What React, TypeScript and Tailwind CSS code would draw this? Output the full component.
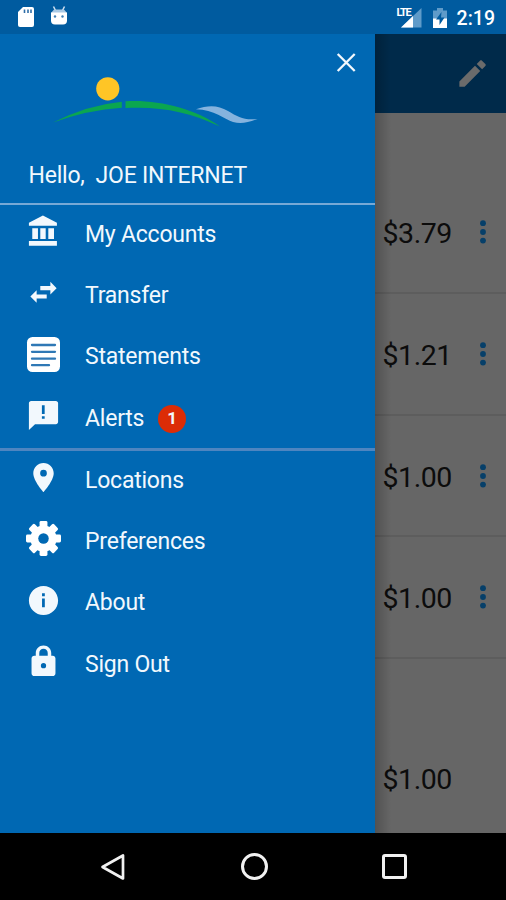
import React from "react";

type IconProps = { className?: string; children: React.ReactNode };

const Icon = ({ className = "w-[35px] h-[35px]", children }: IconProps) => (
  <svg viewBox="0 0 24 24" fill="currentColor" className={className}>
    {children}
  </svg>
);

const mainLinks = [
  {
    label: "My Accounts",
    icon: (
      <Icon>
        <path d="M4.300 9.700v7.500h3.900V9.700H4.300zm5.500 0v7.500h3.700V9.700H9.800zM2 21.800h19.200v-3.300H2v3.300zM15.300 9.700v7.500h3.900V9.700h-3.900zM11.600 1L2 6v2h19.200V6l-9.600-5z" />
      </Icon>
    ),
  },
  {
    label: "Transfer",
    icon: (
      <Icon>
        <path d="M7.300 10.400L3 14.700l4.300 4.300v-2.900h6.900v-2.800H7.300v-2.900zM21 9l-4.300-4.300v2.900H9.800v2.800h6.900v2.900L21 9z" />
      </Icon>
    ),
  },
  {
    label: "Statements",
    icon: (
      <svg viewBox="0 0 35 35" className="w-[35px] h-[35px]">
        <rect x="1" y="0" width="33" height="35" rx="5.500" fill="#fff" />
        <path
          d="M6 8h23M6 14.800h23M6 21.700h23M6 28.200h17"
          stroke="#2f78b5"
          strokeWidth="2.300"
          strokeLinecap="round"
        />
      </svg>
    ),
  },
  {
    label: "Alerts",
    badge: 1,
    icon: (
      <Icon>
        <path d="M20.500 2h-17C2.700 2 2 2.700 2 3.500V22l4.200-4h14.300c.8 0 1.500-.7 1.500-1.500v-13c0-.8-.7-1.500-1.500-1.500zM12.800 14.300h-1.900v-1.800h1.900v1.800zm0-3.300h-1.900V5h1.900v6z" />
      </Icon>
    ),
  },
];

const moreLinks = [
  {
    label: "Locations",
    icon: (
      <Icon>
        <path d="M12 2C8.130 2 5 5.130 5 9c0 5.250 7 13 7 13s7-7.750 7-13c0-3.870-3.130-7-7-7zm0 9.300a2.300 2.300 0 010-4.600 2.300 2.300 0 010 4.600z" />
      </Icon>
    ),
  },
  {
    label: "Preferences",
    icon: (
      <svg viewBox="-12 -12 24 24" className="w-[35px] h-[35px]">
        <g fill="#fff">
          {[0, 45, 90, 135].map((a) => (
            <rect
              key={a}
              x="-2.700"
              y="-12"
              width="5.400"
              height="24"
              rx="1"
              transform={`rotate(${a})`}
            />
          ))}
          <circle r="9" />
        </g>
        <circle r="3.600" fill="#0068b3" />
      </svg>
    ),
  },
  {
    label: "About",
    icon: (
      <Icon>
        <path d="M12 2C6.480 2 2 6.480 2 12s4.480 10 10 10 10-4.480 10-10S17.520 2 12 2zm.9 14.700h-1.900v-6h1.900v6zm0-7.700h-1.900V7.100h1.900V9z" />
      </Icon>
    ),
  },
  {
    label: "Sign Out",
    icon: (
      <Icon>
        <path d="M18.300 8h-1V6.200C17.300 3.300 15 1 12 1S6.700 3.300 6.700 6.200V8h-1c-1.100 0-1.900.9-1.900 2v10c0 1.100.8 2 1.900 2h12.600c1.100 0 1.900-.9 1.900-2V10c0-1.100-.8-2-1.900-2zM12 16.700a1.800 1.800 0 010-3.600 1.800 1.800 0 010 3.600zM14.900 8H9.100V6.200c0-1.700 1.200-2.900 2.900-2.900s2.900 1.200 2.900 2.900V8z" />
      </Icon>
    ),
  },
];

const balances = ["$3.79", "$1.21", "$1.00", "$1.00"];

const StatusBar = () => (
  <div className="h-[34px] shrink-0 bg-[#005b9f] flex items-center justify-between pl-[17px] pr-[11px]">
    <div className="flex items-center">
      <svg viewBox="0 0 18 22" className="w-[18px] h-[22px]">
        <path d="M6 1h9q2 0 2 2v16q0 2-2 2H3q-2 0-2-2V6z" fill="#fff" />
        <path
          d="M7.500 3.500v3.500M11 3.500v3.500M14 3.500v3.500"
          stroke="#2f6ea8"
          strokeWidth="1.600"
        />
      </svg>
      <svg viewBox="0 0 18 22" className="w-[18px] h-[22px] ml-[15px]">
        <path
          d="M3.500 0.500l2 4M14.500 0.500l-2 4"
          stroke="#cfe0f0"
          strokeWidth="1.500"
        />
        <path d="M4 3.500h10L17 7H1z" fill="#a9c9e4" />
        <path d="M1 6.500h16V14.500q0 4-4 4H5q-4 0-4-4z" fill="#fff" />
        <circle cx="5" cy="10.500" r="1.200" fill="#3f7fb4" />
        <circle cx="12.500" cy="10.500" r="1.200" fill="#3f7fb4" />
      </svg>
    </div>
    <div className="flex items-center">
      <div className="relative w-[26px] h-[22px]">
        <svg viewBox="0 0 26 22" className="w-[26px] h-[22px]">
          <path d="M25.500 2v19.500H5z" fill="#5f9bc9" />
          <path d="M17 10v11.500H5z" fill="#fff" />
        </svg>
        <span className="absolute left-px top-0.5 text-[11px] leading-[10px] font-bold tracking-[-1.3px] text-white">
          LTE
        </span>
      </div>
      <svg viewBox="0 0 16 22" className="w-4 h-[22px] ml-[10px] mt-px">
        <path d="M1 3.500h4V1h6v2.500h4V12H1z" fill="#5f9bc9" />
        <path d="M1 11.500h14V21H1z" fill="#fff" />
        <path d="M9.500 5L4 12.500h3.500V18l5-7.500H9z" fill="#005b9f" />
      </svg>
      <span className="ml-[9px] mt-[3px] text-[19.5px] font-medium text-white leading-none">
        2:19
      </span>
    </div>
  </div>
);

const Logo = () => (
  <svg viewBox="0 0 210 57" className="w-[210px] h-[57px]">
    <circle cx="57.800" cy="18.800" r="11.600" fill="#ffc526" />
    <path d="M3 52.500Q38 35 71.800 31.800v6Q38 40 3 52.500z" fill="#0ba650" />
    <path
      d="M75.500 31.300C105 29 145 38 170 56.500C140 42 110 36 75.500 38z"
      fill="#0ba650"
    />
    <path
      d="M146 39.300C158 35 168 35 178 41S194 50.500 207.500 49C198 52.500 191 54.500 183 52S164 39.500 146 39.300z"
      fill="#85b3de"
    />
  </svg>
);

const MenuItem = ({
  label,
  icon,
  badge,
}: {
  label: string;
  icon: React.ReactNode;
  badge?: number;
}) => (
  <li className="h-[61.3px] flex items-center pl-[26px] pb-[3px] cursor-pointer">
    <span className="-mt-[5px]">{icon}</span>
    <span className="ml-[24px] text-[23px] leading-none tracking-[-0.22px]">
      {label}
    </span>
    {badge && (
      <span className="ml-[14px] mt-0.5 w-7 h-7 rounded-full bg-[#dc2c06] text-[17px] font-bold flex items-center justify-center">
        {badge}
      </span>
    )}
  </li>
);

const Drawer = () => (
  <aside className="w-[375px] shrink-0 bg-[#0068b3] text-[#f2f8fd]">
    <div className="h-[169px] flex flex-col">
      <div className="flex justify-between pl-[50px] pr-[19px]">
        <div className="pt-9">
          <Logo />
        </div>
        <svg
          viewBox="0 0 20 20"
          className="w-5 h-5 mt-[18px]"
          stroke="currentColor"
          strokeWidth="2.300"
        >
          <path d="M1.700 2l17 17M18.700 2l-17 17" />
        </svg>
      </div>
      <p className="mt-[37px] pl-[28.5px] text-[23px] leading-6 tracking-[-0.22px] whitespace-pre">
        Hello,{"  "}JOE INTERNET
      </p>
    </div>
    <ul className="h-[245px] border-t-2 border-[#77a9d6]">
      {mainLinks.map((link) => (
        <MenuItem key={link.label} {...link} />
      ))}
    </ul>
    <ul className="border-t-[3px] border-[#4e85c0]">
      {moreLinks.map((link) => (
        <MenuItem key={link.label} {...link} />
      ))}
    </ul>
  </aside>
);

const Accounts = () => (
  <main className="relative flex-1 bg-[#666] text-[#0c0c0c]">
    <header className="h-[79px] bg-[#002a4a] flex items-center justify-end pr-[16px]">
      <Icon className="w-[35px] h-[35px] text-[#6b6b6b]">
        <path d="M3 17.400V21h3.600L17.300 10.300l-3.600-3.600L3 17.400zM20.800 6.900c.4-.4.4-1 0-1.400l-2.300-2.300c-.4-.4-1-.4-1.400 0l-2.200 2.200 3.700 3.700 2.200-2.200z" />
      </Icon>
    </header>
    <ul className="pt-[59px]">
      {balances.map((amount, i) => (
        <li
          key={i}
          className="h-[121.8px] pl-[7.5px] pr-5 flex items-start justify-between border-b-2 border-[#5d5d5d]"
        >
          <span className="mt-[46px] text-[28.5px] leading-8 tracking-[-0.45px]">
            {amount}
          </span>
          <svg
            viewBox="0 0 6 24"
            className="w-[6px] h-6 mt-[48px]"
            fill="#063f69"
          >
            <circle cx="3" cy="3.200" r="2.900" />
            <circle cx="3" cy="12" r="2.900" />
            <circle cx="3" cy="20.600" r="2.900" />
          </svg>
        </li>
      ))}
      <li className="pl-[7.5px] pt-[105px] text-[28.5px] leading-8 tracking-[-0.45px]">
        $1.00
      </li>
    </ul>
    {/* shadow cast by the drawer */}
    <div className="absolute inset-y-0 left-0 w-4 bg-gradient-to-r from-black/20 to-transparent" />
  </main>
);

const NavBar = () => (
  <nav className="h-[67px] shrink-0 bg-black flex items-center justify-between pl-[100px] pr-[99px]">
    <svg
      viewBox="0 0 26 28"
      className="w-[26px] h-7"
      fill="none"
      stroke="#f1f1f1"
    >
      <path d="M2.500 14L23 2.500v23z" strokeWidth="2.700" strokeLinejoin="round" />
    </svg>
    <div className="w-[27px] h-[27px] rounded-full border-[3px] border-[#f1f1f1]" />
    <div className="w-[25px] h-[25px] rounded-[3px] border-[3px] border-[#f1f1f1]" />
  </nav>
);

const App = () => (
  <div className="w-[506px] h-[900px] flex flex-col overflow-hidden font-['Roboto',sans-serif]">
    <StatusBar />
    <div className="flex flex-1 min-h-0 overflow-hidden">
      <Drawer />
      <Accounts />
    </div>
    <NavBar />
  </div>
);

export default App;
